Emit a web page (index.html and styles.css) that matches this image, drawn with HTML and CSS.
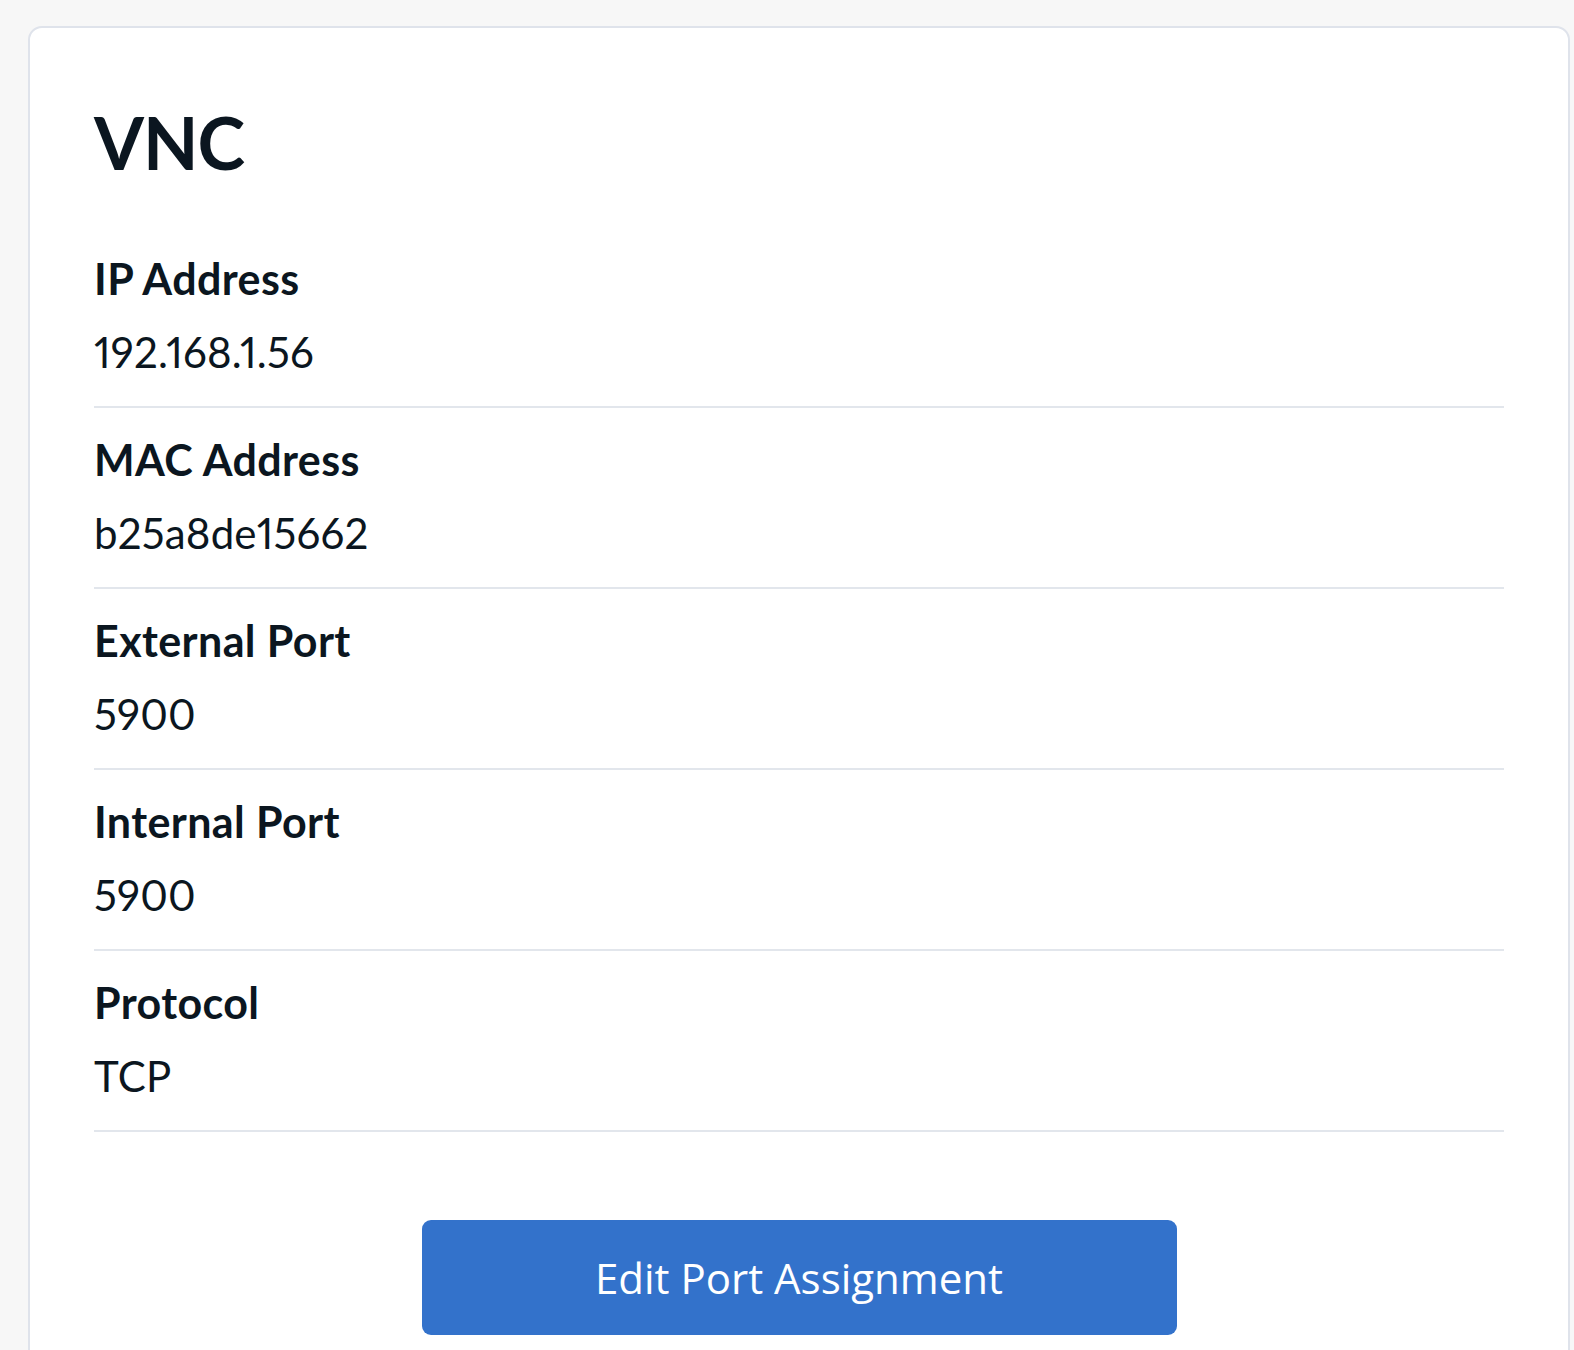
FILE: index.html
```html
<!DOCTYPE html>
<html lang="en">
<head>
<meta charset="utf-8">
<title>VNC</title>
<link rel="stylesheet" href="styles.css">
</head>
<body>
<main class="card">
  <h1 class="title">VNC</h1>
  <dl class="fields">
    <div class="row">
      <dt class="label">IP Address</dt>
      <dd class="value">192.168.1.56</dd>
    </div>
    <div class="row">
      <dt class="label">MAC Address</dt>
      <dd class="value">b25a8de15662</dd>
    </div>
    <div class="row">
      <dt class="label">External Port</dt>
      <dd class="value">5900</dd>
    </div>
    <div class="row">
      <dt class="label">Internal Port</dt>
      <dd class="value">5900</dd>
    </div>
    <div class="row">
      <dt class="label">Protocol</dt>
      <dd class="value">TCP</dd>
    </div>
  </dl>
  <div class="actions">
    <button class="btn" type="button">Edit Port Assignment</button>
  </div>
</main>
</body>
</html>
```

FILE: styles.css
```css
html, body {
  margin: 0;
  padding: 0;
}
body {
  background: #f7f7f7;
  padding: 26px 4px 0 28px;
  font-family: Lato, "Noto Sans", sans-serif;
  color: #0b1620;
}
.card {
  background: #ffffff;
  border: 2px solid #dfe3eb;
  border-radius: 14px;
  padding: 74px 64px 120px 64px;
}
.title {
  margin: 0 0 72px 0;
  font-size: 72px;
  line-height: 80px;
  font-weight: 700;
  letter-spacing: -1px;
}
.fields {
  margin: 0;
}
.row {
  padding: 27px 0 29px 0;
  border-bottom: 2px solid #e2e6ec;
}
.row:first-child {
  padding-top: 0;
}
.label {
  font-size: 43px;
  line-height: 50px;
  font-weight: 700;
  letter-spacing: 0.4px;
  margin: 0;
}
.value {
  font-size: 42px;
  line-height: 50px;
  font-weight: 400;
  font-variant-numeric: proportional-nums;
  letter-spacing: 0.2px;
  margin: 23px 0 0 0;
}
.actions {
  display: flex;
  justify-content: center;
  margin-top: 88px;
}
.btn {
  width: 755px;
  height: 115px;
  background: #3372cb;
  color: #ffffff;
  border: none;
  border-radius: 9px;
  font-family: "Open Sans", sans-serif;
  font-size: 42px;
  font-weight: 400;
}
```
